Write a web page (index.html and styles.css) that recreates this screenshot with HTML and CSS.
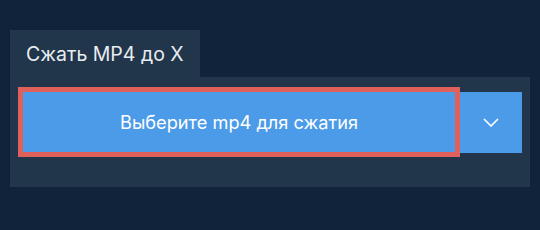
FILE: index.html
```html
<!DOCTYPE html>
<html lang="ru">
<head>
    <meta charset="UTF-8">
    <title>Сжать MP4 до X</title>
    <link rel="stylesheet" href="styles.css">
</head>
<body>
    <div class="tabs">
        <div class="tab">Сжать MP4 до X</div>
    </div>
    <div class="panel">
        <div class="pick-row">
            <button class="pick-button">Выберите mp4 для сжатия</button>
            <button class="drop-button">
                <svg width="16" height="9" viewBox="0 0 16 9"><path d="M1 1 L8 8 L15 1" fill="none" stroke="#fff" stroke-width="1.6"/></svg>
            </button>
        </div>
    </div>
</body>
</html>
```

FILE: styles.css
```css
body { margin: 0; padding: 30px 10px; background: #10233a; font-family: Inter, "Noto Sans", sans-serif; }
.tabs { display: flex; }
.tab { width: 190px; height: 47px; box-sizing: border-box; padding: 0 16px; display: flex; align-items: center; background: #22364b; color: #e8edf2; font-size: 19.5px; }
.panel { background: #22364b; padding: 15px 8px 34px 13px; }
.pick-row { display: flex; height: 61px; }
.pick-button { flex: 1; height: 60px; border: none; outline: 5px solid #e0605c; background: #4c9be8; color: #fff; font-family: inherit; font-size: 18.2px; cursor: pointer; margin-right: 5px; }
.drop-button { width: 62px; border: none; background: #4c9be8; display: flex; align-items: center; justify-content: center; cursor: pointer; padding: 0; }
```
